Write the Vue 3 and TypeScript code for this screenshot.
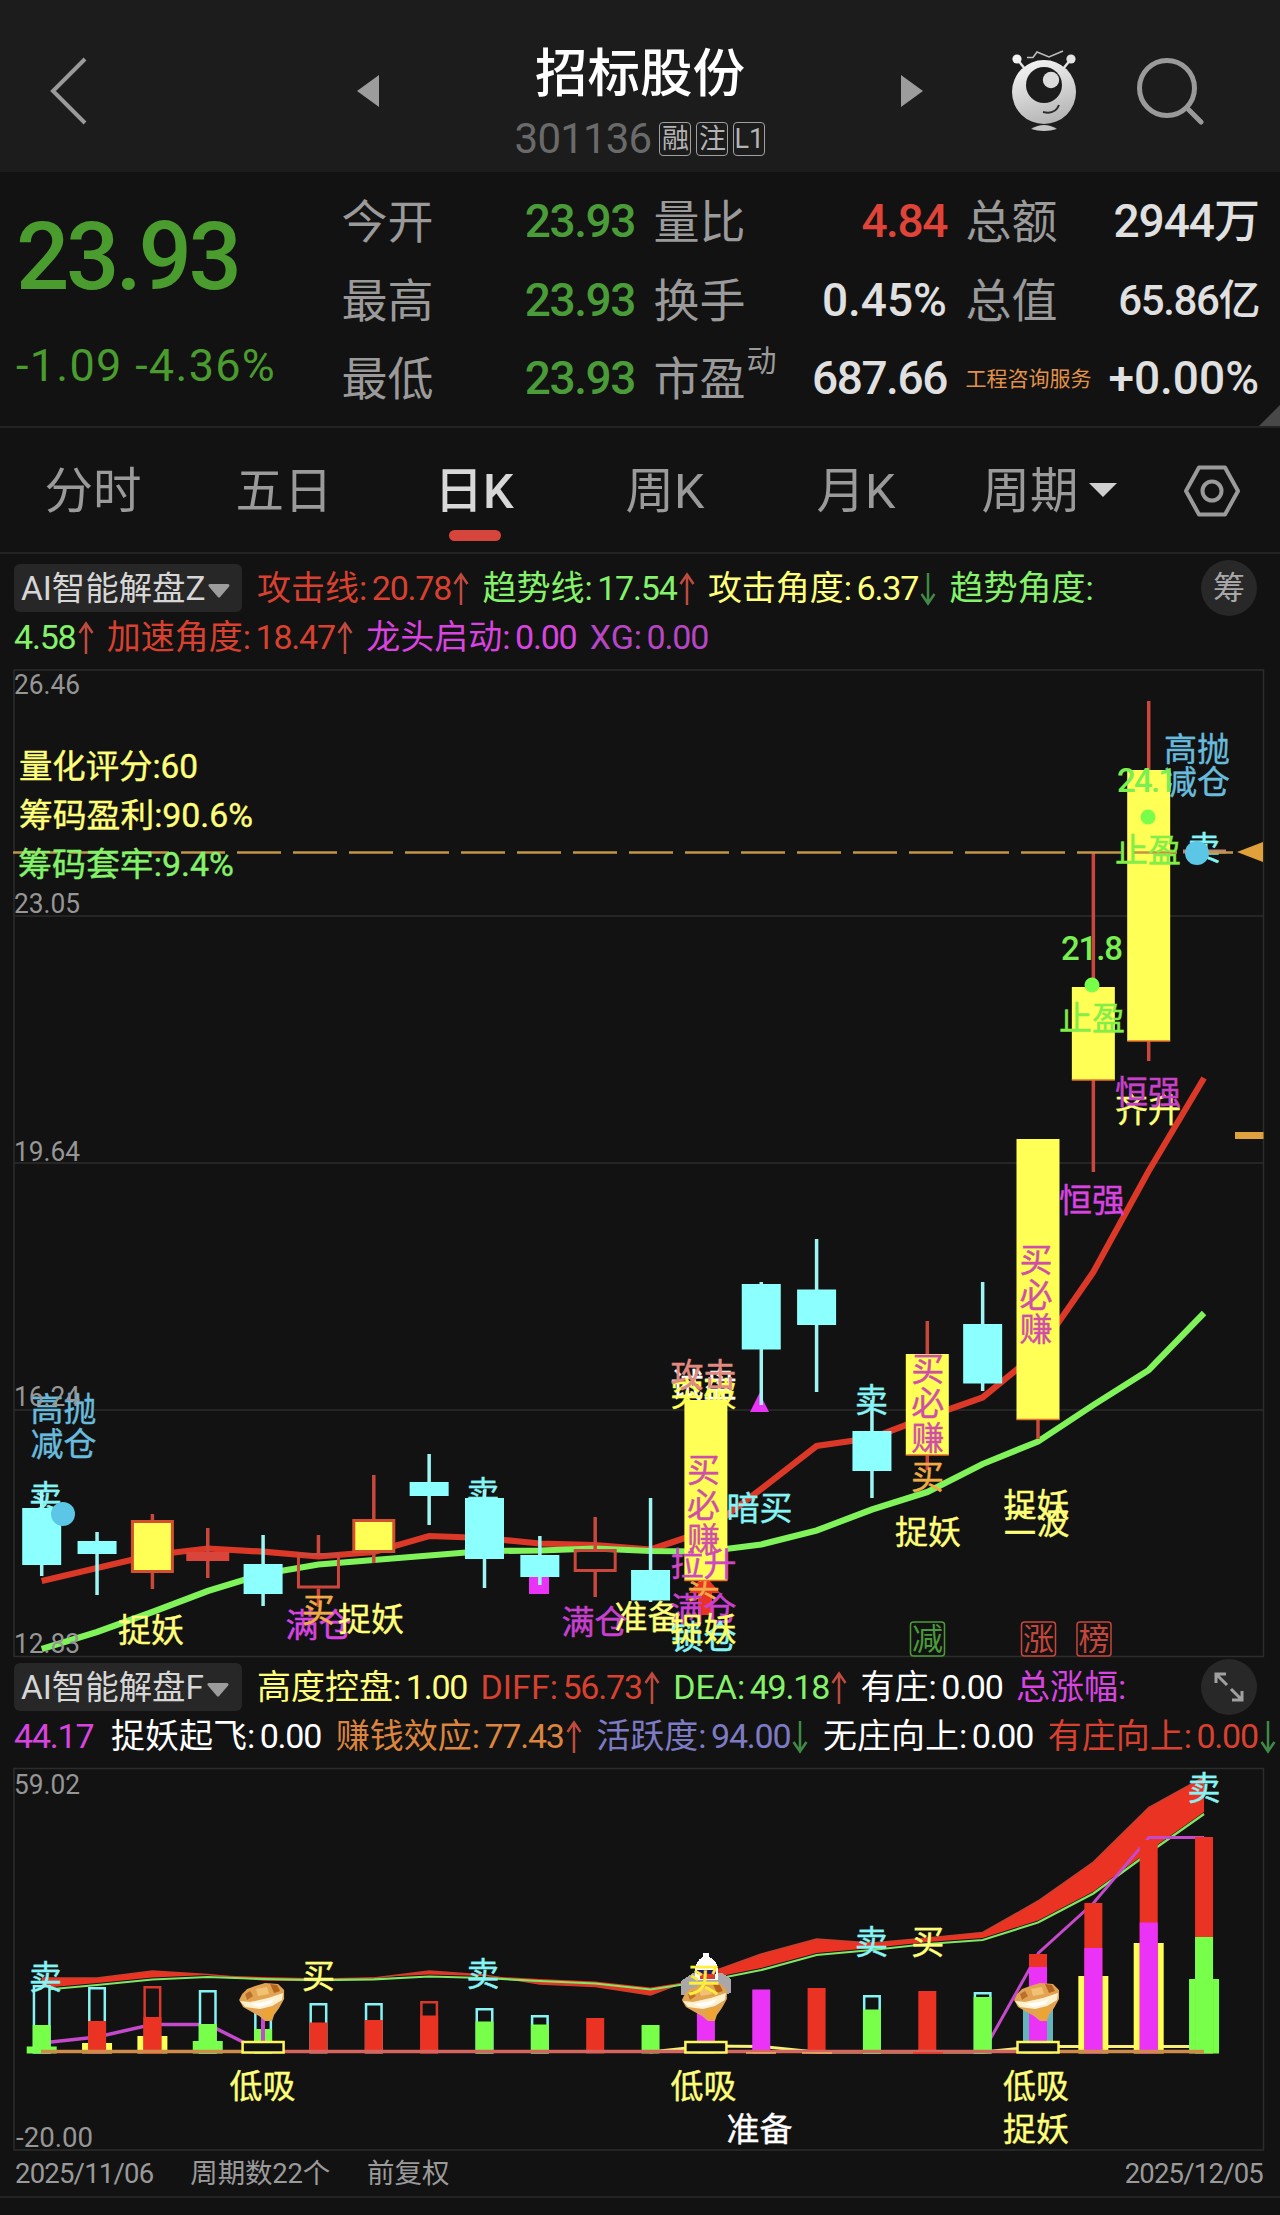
<script setup lang="ts">
import { computed } from 'vue';

type Tone = 'up' | 'down' | 'plain';
type Kind = 'cyan' | 'yellow' | 'boxed' | 'hollow' | 'flat';

interface Quote {
  label: string;
  value: string;
  tone: Tone;
  size?: 'percent' | 'large' | 'small';
  sup?: string;
  tag?: boolean;
}

interface Metric {
  name?: string;
  value?: string;
  color: string;
  trend?: 'up' | 'down';
}

interface Mark {
  text: string;
  x: number;
  y: number;
  color: string;
}

/* ----------------------------------
 * Quote header
 * --------------------------------*/
const quotes: Quote[][] = [
  [
    { label: '今开', value: '23.93', tone: 'down' },
    { label: '最高', value: '23.93', tone: 'down' },
    { label: '最低', value: '23.93', tone: 'down' },
  ],
  [
    { label: '量比', value: '4.84', tone: 'up' },
    { label: '换手', value: '0.45%', tone: 'plain', size: 'percent' },
    { label: '市盈', value: '687.66', tone: 'plain', sup: '动' },
  ],
  [
    { label: '总额', value: '2944万', tone: 'plain', size: 'large' },
    { label: '总值', value: '65.86亿', tone: 'plain', size: 'small' },
    { label: '工程咨询服务', value: '+0.00%', tone: 'plain', size: 'percent', tag: true },
  ],
];

const tabs = ['分时', '五日', '日K', '周K', '月K', '周期'];
const activeTab = '日K';

/* ----------------------------------
 * Indicator legends
 * --------------------------------*/
const RED = '#d8402f';
const GREEN = '#84f26a';
const YELLOW = '#ffff7a';
const MAGENTA = '#d944e0';
const CYAN = '#86f4f5';
const BLUE = '#68bbdc';
const ORANGE = '#efab45';

const legendZ: Metric[][] = [
  [
    { name: '攻击线', value: '20.78', color: RED, trend: 'up' },
    { name: '趋势线', value: '17.54', color: GREEN, trend: 'up' },
    { name: '攻击角度', value: '6.37', color: YELLOW, trend: 'down' },
    { name: '趋势角度', color: GREEN },
  ],
  [
    { value: '4.58', color: GREEN, trend: 'up' },
    { name: '加速角度', value: '18.47', color: RED, trend: 'up' },
    { name: '龙头启动', value: '0.00', color: MAGENTA },
    { name: 'XG', value: '0.00', color: '#b746c4' },
  ],
];

const legendF: Metric[][] = [
  [
    { name: '高度控盘', value: '1.00', color: YELLOW },
    { name: 'DIFF', value: '56.73', color: RED, trend: 'up' },
    { name: 'DEA', value: '49.18', color: GREEN, trend: 'up' },
    { name: '有庄', value: '0.00', color: '#ffffff' },
    { name: '总涨幅', color: MAGENTA },
  ],
  [
    { value: '44.17', color: MAGENTA },
    { name: '捉妖起飞', value: '0.00', color: '#ffffff' },
    { name: '赚钱效应', value: '77.43', color: '#dc853f', trend: 'up' },
    { name: '活跃度', value: '94.00', color: '#7d7bc4', trend: 'down' },
    { name: '无庄向上', value: '0.00', color: '#ffffff' },
    { name: '有庄向上', value: '0.00', color: RED, trend: 'down' },
  ],
];

/* ----------------------------------
 * Shared time axis
 * --------------------------------*/
const cx = (i: number) => 41.7 + 55.35 * i;
const toPoints = (ys: number[]) => ys.map((y, i) => `${cx(i)},${y}`).join(' ');

/* ----------------------------------
 * Candles: [kind, high, body top, body bottom, low]
 * --------------------------------*/
const candleRows: [Kind, number, number, number, number][] = [
  ['cyan', 1490, 1508, 1565, 1576],
  ['cyan', 1532, 1541, 1554, 1595],
  ['boxed', 1514, 1520, 1573, 1589],
  ['flat', 1528, 1552, 1561, 1578],
  ['cyan', 1535, 1564, 1594, 1606],
  ['hollow', 1535, 1553, 1588.5, 1607],
  ['boxed', 1475, 1519, 1553, 1563],
  ['cyan', 1454, 1482, 1496, 1525],
  ['cyan', 1490, 1498, 1559, 1588],
  ['cyan', 1536, 1555, 1577, 1585],
  ['hollow', 1517, 1549, 1572, 1597],
  ['cyan', 1498, 1570, 1600.5, 1602],
  ['yellow', 1400, 1400, 1580.5, 1581],
  ['cyan', 1282, 1284, 1349.5, 1405],
  ['cyan', 1239, 1289.5, 1325, 1392],
  ['cyan', 1400, 1431, 1471, 1498],
  ['yellow', 1321, 1354, 1455, 1470],
  ['cyan', 1282, 1324, 1383.5, 1391],
  ['yellow', 1139, 1139, 1419.5, 1439],
  ['yellow', 852, 987, 1080, 1172],
  ['yellow', 701, 770, 1041, 1061],
];

const candles = computed(() =>
  candleRows.map(([kind, high, top, bottom, low], i) => ({
    kind,
    x: cx(i),
    high,
    top,
    bottom,
    low,
    w: kind === 'cyan' ? 39 : 43,
  }))
);

const attackLine = toPoints([
  1581, 1568, 1555, 1548.5, 1551.7, 1556.5, 1552, 1536, 1538, 1543.5, 1545,
  1549.5, 1531, 1489, 1446, 1438, 1417, 1397.5, 1352, 1272, 1171, 1078,
]);
const trendLine = toPoints([
  1649, 1632, 1612, 1591, 1574, 1564.5, 1560, 1555.5, 1551, 1550.5, 1548.5,
  1551, 1551.5, 1544.5, 1530.5, 1509.5, 1492, 1464, 1441.5, 1405, 1370, 1313,
]);

const gridLines = [916, 1163, 1410];
const priceAxis = [
  { text: '26.46', y: 694 },
  { text: '23.05', y: 913 },
  { text: '19.64', y: 1160.5 },
  { text: '16.24', y: 1406 },
  { text: '12.83', y: 1653 },
];
const chipStats = [
  { text: '量化评分:60', x: 19, y: 778, w: 179, color: YELLOW },
  { text: '筹码盈利:90.6%', x: 19, y: 827, w: 234, color: YELLOW },
  { text: '筹码套牢:9.4%', x: 18, y: 876, w: 216, color: GREEN },
];

/* signals hidden partly by the candles */
const backMarks: Mark[] = [
  { text: '卖', x: 45.5, y: 1497, color: CYAN },
  { text: '卖', x: 483, y: 1493, color: CYAN },
  { text: '减仓', x: 1197, y: 782, color: BLUE },
  { text: '试盘', x: 703.5, y: 1385, color: '#ffffff' },
  { text: '突破', x: 703.5, y: 1394, color: '#ffff55' },
  { text: '买', x: 703.5, y: 1586, color: ORANGE },
  { text: '卖', x: 1204, y: 848, color: CYAN },
];

const stack = (text: string, x: number, y: number): Mark[] =>
  [...text].map((c, i) => ({ text: c, x, y: y + i * 34.6, color: '#cf4fa8' }));

const frontMarks: Mark[] = [
  { text: '高抛', x: 63.5, y: 1409, color: BLUE },
  { text: '减仓', x: 63.5, y: 1444, color: BLUE },
  { text: '捉妖', x: 151, y: 1630, color: YELLOW },
  { text: '满仓', x: 318.5, y: 1625, color: MAGENTA },
  { text: '买', x: 318.5, y: 1610, color: ORANGE },
  { text: '捉妖', x: 371, y: 1619, color: YELLOW },
  { text: '满仓', x: 594.5, y: 1621.5, color: '#c840d0' },
  { text: '准备', x: 647.5, y: 1617, color: YELLOW },
  { text: '攻击', x: 703.5, y: 1375, color: '#e08a80' },
  { text: '暗买', x: 759.5, y: 1508, color: CYAN },
  { text: '卖', x: 871.6, y: 1400, color: CYAN },
  { text: '买', x: 927.5, y: 1477, color: ORANGE },
  { text: '捉妖', x: 928, y: 1532, color: YELLOW },
  { text: '二波', x: 1036.5, y: 1522, color: YELLOW },
  { text: '捉妖', x: 1036.5, y: 1505, color: YELLOW },
  { text: '恒强', x: 1092, y: 1200, color: MAGENTA },
  { text: '齐升', x: 1148, y: 1110, color: YELLOW },
  { text: '恒强', x: 1148, y: 1092, color: '#c840c8' },
  { text: '止盈', x: 1092, y: 1018, color: '#82ee48' },
  { text: '止盈', x: 1148, y: 849.5, color: '#82ee48' },
  { text: '高抛', x: 1197, y: 749, color: BLUE },
  { text: '拉升', x: 703.5, y: 1563.5, color: '#cc48c4' },
  { text: '满仓', x: 703.5, y: 1609, color: '#c840d0' },
  { text: '锁仓', x: 703.5, y: 1637, color: CYAN },
  { text: '捉妖', x: 703.5, y: 1629, color: '#ffff60' },
  ...stack('买必赚', 703.5, 1470),
  ...stack('买必赚', 927.7, 1368.5),
  ...stack('买必赚', 1036, 1260),
];

const badges = [
  { text: '减', x: 927.5, color: '#4b9a39' },
  { text: '涨', x: 1038.5, color: '#c5463c' },
  { text: '榜', x: 1094, color: '#c5463c' },
];

/* ----------------------------------
 * Lower panel
 * --------------------------------*/
const BASE = 2053;
const diff = [
  1978, 1978, 1971, 1974.5, 1980, 1980.5, 1978, 1971, 1975, 1984, 1986.5, 1995,
  1974, 1954, 1939, 1943, 1938, 1932.5, 1901, 1862, 1807.5, 1777,
];
const dea = [
  1990, 1985, 1979.5, 1977, 1979, 1980.2, 1979.3, 1976.5, 1978, 1981, 1983.5,
  1989.5, 1981, 1970, 1955, 1950, 1944, 1940, 1922.5, 1893.5, 1853, 1814,
];
const ribbon = computed(
  () =>
    `${toPoints(diff)} ${dea
      .map((y, i) => `${cx(i)},${y - 2}`)
      .reverse()
      .join(' ')}`
);

/* outlined part of each bar: [index, top, color] */
const shells: [number, number, string][] = [
  [0, 1985, CYAN], [1, 1987, CYAN], [2, 1986, '#d9382b'], [3, 1990, CYAN],
  [4, 1996, CYAN], [5, 2003, CYAN], [6, 2003, CYAN], [7, 2001, '#d9382b'],
  [8, 2008, CYAN], [9, 2015, CYAN], [15, 1995, CYAN], [17, 1992, CYAN],
];
/* filled part of each bar: [index, top, color] */
const fills: [number, number, string][] = [
  [0, 2025, '#78ff4a'], [1, 2021, '#ea3323'], [2, 2017, '#ea3323'],
  [3, 2024, '#78ff4a'], [4, 2029, '#78ff4a'], [5, 2022.5, '#ea3323'],
  [6, 2020, '#ea3323'], [7, 2015.5, '#ea3323'], [8, 2021.5, '#78ff4a'],
  [9, 2024.5, '#78ff4a'], [10, 2018, '#ea3323'], [11, 2025, '#78ff4a'],
  [12, 1995, '#ea33f7'], [13, 1989.5, '#ea33f7'], [14, 1988, '#ea3323'],
  [15, 2009.5, '#78ff4a'], [16, 1991, '#ea3323'], [17, 1997, '#78ff4a'],
  [18, 1954, '#ea3323'], [18, 1967, '#ea33f7'],
  [19, 1903, '#ea3323'], [19, 1948, '#ea33f7'],
  [20, 1840, '#ea3323'], [20, 1922.5, '#ea33f7'],
  [21, 1837, '#ea3323'], [21, 1937, '#78ff4a'],
];
/* wide bars behind the narrow ones */
const wides: [number, number, string][] = [
  [0, 2046.5, '#78ff4a'], [1, 2043, '#ffff55'], [2, 2036, '#ffff55'],
  [3, 2041, '#78ff4a'], [18, 1990, '#63b5bb'], [19, 1976, '#ffff55'],
  [20, 1943, '#ffff55'], [21, 1979, '#78ff4a'],
];
const boxes = [4, 12, 18];

const lowerMarks: Mark[] = [
  { text: '卖', x: 45.5, y: 1977, color: CYAN },
  { text: '买', x: 318.5, y: 1976, color: YELLOW },
  { text: '卖', x: 483, y: 1974, color: CYAN },
  { text: '卖', x: 871.6, y: 1942, color: CYAN },
  { text: '买', x: 927.7, y: 1942, color: YELLOW },
  { text: '卖', x: 1204, y: 1788, color: CYAN },
  { text: '低吸', x: 262.5, y: 2086, color: YELLOW },
  { text: '低吸', x: 703.5, y: 2086, color: YELLOW },
  { text: '准备', x: 759.5, y: 2129, color: '#ffffff' },
  { text: '低吸', x: 1036, y: 2086, color: YELLOW },
  { text: '捉妖', x: 1036, y: 2129, color: YELLOW },
];
</script>

<template>
  <main class="page">
    <header class="topbar">
      <svg class="topbar__back" viewBox="0 0 40 70" width="40" height="70">
        <path d="M36 3 L4 35 L36 67" fill="none" stroke="#9a9a9a" stroke-width="4" />
      </svg>
      <svg class="topbar__prev" viewBox="0 0 22 32" width="22" height="32">
        <path d="M22 0 L0 16 L22 32 Z" fill="#9c9c9c" />
      </svg>
      <div class="topbar__stock">
        <h1 class="topbar__name">招标股份</h1>
        <div class="topbar__code">
          <span class="topbar__number">301136</span>
          <span v-for="flag in ['融', '注', 'L1']" :key="flag" class="topbar__flag">{{ flag }}</span>
        </div>
      </div>
      <svg class="topbar__next" viewBox="0 0 22 32" width="22" height="32">
        <path d="M0 0 L22 16 L0 32 Z" fill="#9c9c9c" />
      </svg>
      <svg class="topbar__robot" viewBox="0 0 66 84" width="66" height="84">
        <defs>
          <linearGradient id="robot" x1="0.3" y1="0" x2="0.6" y2="1">
            <stop offset="0" stop-color="#f4f4f4" />
            <stop offset="1" stop-color="#b4b4b4" />
          </linearGradient>
        </defs>
        <path d="M6 10 L14 20 M60 10 L52 20" stroke="#e2e2e2" stroke-width="2.5" />
        <circle cx="6" cy="10" r="4.6" fill="#f2f2f2" />
        <circle cx="60" cy="10" r="4.6" fill="#e4e4e4" />
        <path d="M16 8.500 L22 8.500 L26 3 L38 8 L52 2" fill="none" stroke="#bdbdbd" stroke-width="1.6" />
        <circle cx="33" cy="43" r="32" fill="url(#robot)" />
        <circle cx="33" cy="36" r="18" fill="#1c1c1c" />
        <circle cx="40" cy="31" r="8.200" fill="#dcdcdc" />
        <path d="M32 63 Q44 66 48 56" fill="none" stroke="#2c2c2c" stroke-width="2" />
        <path d="M20 80 Q33 72 46 80 Q33 84 20 80 Z" fill="#c4c4c4" />
      </svg>
      <svg class="topbar__search" viewBox="0 0 68 70" width="68" height="70">
        <circle cx="31" cy="31" r="27.500" fill="none" stroke="#9a9a9a" stroke-width="5" />
        <path d="M51 51 L65 65" stroke="#9a9a9a" stroke-width="5" stroke-linecap="round" />
      </svg>
    </header>

    <section class="quote">
      <div class="quote__main">
        <strong class="quote__price">23.93</strong>
        <span class="quote__change">-1.09 -4.36%</span>
      </div>
      <dl v-for="(column, c) in quotes" :key="c" class="quote__column">
        <div v-for="q in column" :key="q.label" class="quote__row">
          <dt :class="q.tag ? 'quote__tag' : 'quote__label'">
            {{ q.label }}<sup v-if="q.sup">{{ q.sup }}</sup>
          </dt>
          <dd class="quote__value" :class="[`quote__value--${q.tone}`, q.size && `quote__value--${q.size}`]">
            {{ q.value }}
          </dd>
        </div>
      </dl>
      <i class="quote__corner" />
    </section>

    <nav class="tabs">
      <button v-for="tab in tabs" :key="tab" class="tabs__item" :class="{ 'tabs__item--active': tab === activeTab }">
        {{ tab }}<i v-if="tab === '周期'" class="tabs__caret" />
      </button>
      <svg class="tabs__settings" viewBox="0 0 58 52" width="58" height="52">
        <path d="M16 2.500 H42 L55 26 L42 49.500 H16 L3 26 Z" fill="none" stroke="#9a9a9a" stroke-width="4" stroke-linejoin="round" />
        <circle cx="29" cy="26" r="9.500" fill="none" stroke="#9a9a9a" stroke-width="4" />
      </svg>
    </nav>

    <section
      v-for="legend in [
        { id: 'Z', rows: legendZ },
        { id: 'F', rows: legendF },
      ]"
      :key="legend.id"
      class="legend"
      :class="`legend--${legend.id}`"
    >
      <div v-for="(row, r) in legend.rows" :key="r" class="legend__row">
        <button v-if="r === 0" class="legend__picker">
          <span>AI智能解盘{{ legend.id }}</span>
          <svg class="legend__caret" viewBox="0 0 24 14" width="24" height="14">
            <path d="M3 1.500 H21 L12 12 Z" fill="#9c9c9c" stroke="#9c9c9c" stroke-width="3" stroke-linejoin="round" />
          </svg>
        </button>
        <span v-for="(m, k) in row" :key="k" class="legend__item" :style="{ color: m.color }">
          <span v-if="m.name" class="legend__name">{{ m.name }}:</span>
          <span v-if="m.value" class="legend__num">{{ m.value }}</span>
          <svg v-if="m.trend" class="legend__arrow" viewBox="0 0 16 34" width="16" height="34">
            <path
              v-if="m.trend === 'up'"
              d="M8 33 V3 M1.500 12 L8 2.500 L14.500 12"
              fill="none"
              stroke="#bf4a3e"
              stroke-width="2.500"
            />
            <path v-else d="M8 1 V31 M1.500 22 L8 31.500 L14.500 22" fill="none" stroke="#3f8a45" stroke-width="2.500" />
          </svg>
        </span>
        <span v-if="r === 0" class="legend__round">
          <template v-if="legend.id === 'Z'">筹</template>
          <svg v-else viewBox="0 0 30 30" width="30" height="30">
            <path
              d="M13 13 L3 3 M2 11 V2 H12 M17 17 L27 27 M28 19 V28 H18"
              fill="none"
              stroke="#a0a0a0"
              stroke-width="3"
            />
          </svg>
        </span>
      </div>
    </section>

    <svg class="chart chart--price" viewBox="0 666 1280 994" width="1280" height="994">
      <path d="M14 670 H1263.500 V1656.500 H14 Z" class="frame" />
      <path v-for="y in gridLines" :key="y" :d="`M14 ${y} H1263`" class="frame" />

      <polyline :points="attackLine" class="line line--attack" />
      <polyline :points="trendLine" class="line line--trend" />

      <rect x="529" y="1575" width="20" height="19" fill="#ea33f7" />
      <path d="M759.500 1393 L769 1412 H750 Z" fill="#ea33f7" />
      <path d="M704 1574 L720 1593 H712 V1615 H698 V1593 H689 Z" fill="#ea3323" />
      <path d="M1183 851.500 H1226" stroke="#b98178" stroke-width="4" />

      <text
        v-for="(m, i) in backMarks"
        :key="`b${i}`"
        class="mark"
        :x="m.x"
        :y="m.y + 12"
        :fill="m.color"
        :stroke="m.color"
      >{{ m.text }}</text>

      <g v-for="c in candles" :key="c.x" :class="`candle candle--${c.kind}`">
        <path v-if="c.kind === 'hollow'" :d="`M${c.x} ${c.high} V${c.top} M${c.x} ${c.bottom} V${c.low}`" class="wick" />
        <path v-else :d="`M${c.x} ${c.high} V${c.low}`" class="wick" />
        <rect
          v-if="c.kind === 'hollow' || c.kind === 'boxed'"
          class="body"
          :x="c.x - c.w / 2 + 1.5"
          :y="c.top + 1.5"
          :width="c.w - 3"
          :height="c.bottom - c.top - 3"
        />
        <rect v-else class="body" :x="c.x - c.w / 2" :y="c.top" :width="c.w" :height="c.bottom - c.top" />
        <path v-if="c.kind === 'yellow'" :d="`M${c.x - c.w / 2} ${c.bottom} h${c.w}`" stroke="#e8702f" stroke-width="1.500" />
      </g>

      <path d="M13 852.500 H1233" stroke="#c09548" stroke-width="2.500" stroke-dasharray="44 12" />
      <path d="M1237 852 L1263 842 V862 Z" fill="#e0a13b" />
      <path d="M1235 1135.500 H1263.500" stroke="#dfa03e" stroke-width="7" />

      <circle cx="63" cy="1514" r="12" fill="#5cc6e6" />
      <circle cx="1197" cy="853" r="12" fill="#5cc6e6" />
      <circle cx="1092" cy="985" r="7.500" fill="#78ff4a" />
      <circle cx="1148" cy="817" r="7.500" fill="#78ff4a" />

      <text
        v-for="(m, i) in frontMarks"
        :key="`f${i}`"
        class="mark"
        :x="m.x"
        :y="m.y + 12"
        :fill="m.color"
        :stroke="m.color"
      >{{ m.text }}</text>
      <text class="target" x="1061" y="960" textLength="62">21.8</text>
      <text class="target" x="1117" y="792" textLength="60">24.1</text>

      <text
        v-for="s in chipStats"
        :key="s.text"
        class="mark mark--left"
        :x="s.x"
        :y="s.y"
        :textLength="s.w"
        lengthAdjust="spacingAndGlyphs"
        :fill="s.color"
        :stroke="s.color"
      >{{ s.text }}</text>

      <g v-for="b in badges" :key="b.text">
        <rect :x="b.x - 17" y="1622" width="34" height="34" rx="3" fill="#121212" :stroke="b.color" stroke-width="1.500" />
        <text class="badge" :x="b.x" y="1650" :fill="b.color">{{ b.text }}</text>
      </g>

      <text v-for="a in priceAxis" :key="a.text" class="axis" x="14" :y="a.y" textLength="66" lengthAdjust="spacingAndGlyphs">{{ a.text }}</text>
    </svg>

    <svg class="chart chart--volume" viewBox="0 1764 1280 390" width="1280" height="390">
      <path d="M14 1768.500 H1263.500 V2150 H14 Z" class="frame" />

      <polygon :points="ribbon" fill="#ea3323" />
      <polyline :points="toPoints(diff)" fill="none" stroke="#c9402e" stroke-width="1.500" />
      <polyline :points="toPoints(dea)" fill="none" stroke="#7fe763" stroke-width="2.200" />

      <polyline
        points="41.700,2043 97,2037 152,2024.500 208,2024.500 251,2046"
        fill="none"
        stroke="#c44acb"
        stroke-width="3.500"
      />
      <polyline
        points="983,2052 1038.500,1953 1093.500,1903 1149,1837.500 1204,1837.500"
        fill="none"
        stroke="#c44acb"
        stroke-width="3"
      />
      <polyline
        points="650,2052 706,2046 761,2046.500 816,2052 983,2052 1038,2046.500 1204,2046.500"
        fill="none"
        stroke="#f7ee7c"
        stroke-width="3"
      />

      <rect
        v-for="([i, top, color], k) in wides"
        :key="`w${k}`"
        :x="cx(i) - 15"
        :y="top"
        width="30"
        :height="BASE + 0.5 - top"
        :fill="color"
      />
      <rect
        v-for="([i, top, color], k) in shells"
        :key="`s${k}`"
        :x="cx(i) - 7.75"
        :y="top + 1.25"
        width="15.500"
        :height="BASE - top - 2"
        fill="#121212"
        :stroke="color"
        stroke-width="2.500"
      />
      <rect
        v-for="([i, top, color], k) in fills"
        :key="`v${k}`"
        :x="cx(i) - 9"
        :y="top"
        width="18"
        :height="BASE + 0.5 - top"
        :fill="color"
      />
      <path d="M263 2018 V2042" stroke="#c44acb" stroke-width="4" />

      <path d="M41 2051.500 H263 M1038 2051.500 H1204" stroke="#cf8a4c" stroke-width="3.500" />
      <path d="M263 2051.500 H1038" stroke="#d4665f" stroke-width="3.500" />
      <path d="M746 2053 H776 M802 2053 H832" stroke="#f4b06a" stroke-width="1.500" />
      <path d="M913 2053 H943" stroke="#ea3323" stroke-width="1.500" />

      <rect
        v-for="i in boxes"
        :key="`x${i}`"
        :x="cx(i) - 20.5"
        y="2042"
        width="41"
        height="10.500"
        fill="#121212"
        stroke="#fdf65c"
        stroke-width="2.500"
      />

      <g shape-rendering="crispEdges">
        <path d="M681 1981 L693 1973 H722 L731 1979 V1993 L722 1995 H681 Z" fill="#a9a7a8" />
        <path d="M703 1953 h6 v4 q8 3 9 13 v10 h-23 v-10 q1 -10 8 -13 Z" fill="#ffffff" />
        <path d="M697 1970 h19 v4 h-19 Z" fill="#24186e" />
        <path d="M700 1974 h15 v5 h-15 Z" fill="#d93a2c" />
      </g>

      <!-- gold ingots -->
      <g v-for="i in boxes" :key="`g${i}`" :transform="`translate(${cx(i) - 1} 2002)`">
        <path
          d="M-20 -8 L-15 -13 L-7 -16 L3 -19 L16 -18 L22 -12 L22 -3 L17 6 L12 13 L10 19 L3 19 L-3 14 L-12 9 L-19 5 L-23 -2 Z"
          fill="#e2a452"
        />
        <path d="M-17 -8 L-12 -11 L-9 -6 L-15 -2 Z" fill="#b9702c" />
        <path d="M8 -18 L15 -17 L18 -11 L12 -9 Z" fill="#b5651f" />
        <path d="M-6 -13 L5 -15 L7 -8 L-4 -6 Z" fill="#f0c272" />
        <path d="M-22 -1 L-12 0 L6 -4 L21 -9 L20 -2 L10 4 L-2 7 L-17 5 Z" fill="#fff1cd" />
        <path d="M-12 2 L2 0 L12 -3 L8 2 L-3 5 Z" fill="#ffffff" />
        <path d="M0 9 L12 5 L10 16 L4 18 Z" fill="#eda433" />
      </g>
      <text class="mark" x="703.500" y="1992" fill="#ffee3a" stroke="#ffee3a">买</text>

      <text
        v-for="(m, i) in lowerMarks"
        :key="`l${i}`"
        class="mark"
        :x="m.x"
        :y="m.y + 12"
        :fill="m.color"
        :stroke="m.color"
      >{{ m.text }}</text>
      <text class="axis" x="14" y="1794" textLength="66" lengthAdjust="spacingAndGlyphs">59.02</text>
      <text class="axis" x="16" y="2147" textLength="77" lengthAdjust="spacingAndGlyphs">-20.00</text>
    </svg>

    <footer class="footer">
      <span class="footer__date">2025/11/06</span>
      <span class="footer__count">周期数22个</span>
      <span>前复权</span>
      <span class="footer__date footer__date--end">2025/12/05</span>
    </footer>
  </main>
</template>

<style>
body {
  margin: 0;
  background: #121212;
}
</style>

<style scoped>
.page {
  display: grid;
  grid-template-rows: 172px 256px 126px 112px 994px 104px 390px 61px;
  grid-template-columns: 1280px;
  width: 1280px;
  height: 2215px;
  overflow: hidden;
  background: #121212;
  color: #9a9a9a;
  font-family: Roboto, 'Noto Sans CJK SC', sans-serif;
}
button {
  padding: 0;
  border: none;
  background: none;
  color: inherit;
  font: inherit;
}

/* Top bar */
.topbar {
  display: flex;
  box-sizing: border-box;
  height: 172px;
  padding-left: 49px;
  background: #1c1c1c;
}
.topbar__back {
  margin-top: 56px;
}
.topbar__prev {
  margin: 75px 0 0 268px;
}
.topbar__stock {
  display: flex;
  flex-direction: column;
  align-items: center;
  width: 522px;
}
.topbar__name {
  margin: 43px 0 0;
  color: #ffffff;
  font-size: 52.5px;
  font-weight: 500;
  line-height: 62px;
}
.topbar__code {
  display: flex;
  align-items: center;
  gap: 5px;
  height: 36px;
  margin-top: 16px;
}
.topbar__number {
  margin-right: 3px;
  color: #6a6a6a;
  font-size: 42px;
  line-height: 34px;
  letter-spacing: -0.8px;
}
.topbar__flag {
  box-sizing: border-box;
  width: 32px;
  height: 34px;
  border: 1.5px solid #a0a0a0;
  border-radius: 4px;
  color: #b4b4b4;
  font-size: 27px;
  line-height: 32px;
  text-align: center;
}
.topbar__next {
  margin-top: 75px;
}
.topbar__robot {
  margin: 49px 0 0 88px;
}
.topbar__search {
  margin: 57px 0 0 59px;
}

/* Quote */
.quote {
  position: relative;
  display: flex;
  box-sizing: border-box;
  height: 256px;
  padding: 11px 21px 0 16px;
  border-bottom: 2px solid #232323;
}
.quote__main {
  display: flex;
  flex-direction: column;
  width: 325.5px;
  color: #4a9c2e;
}
.quote__price {
  margin-top: 24px;
  font-size: 94px;
  font-weight: 500;
  line-height: 100px;
  letter-spacing: -3.5px;
}
.quote__change {
  margin-top: 34px;
  font-size: 45px;
  line-height: 50px;
  letter-spacing: 1.3px;
  white-space: nowrap;
}
.quote__column {
  width: 293.5px;
  margin: 0 18.5px 0 0;
}
.quote__column:last-of-type {
  margin-right: 0;
}
.quote__row {
  display: flex;
  align-items: center;
  justify-content: space-between;
  height: 78.5px;
}
.quote__label {
  position: relative;
  font-size: 46px;
  line-height: 78px;
}
.quote__label sup {
  position: absolute;
  top: -18px;
  left: 93px;
  font-size: 30px;
}
.quote__tag {
  margin-top: -4px;
  color: #e2924a;
  font-size: 21px;
  white-space: nowrap;
}
.quote__value {
  margin: -2px 0 0;
  font-size: 46px;
  font-weight: 500;
  line-height: 78px;
  letter-spacing: -1.4px;
  white-space: nowrap;
}
.quote__value--percent {
  letter-spacing: 0;
}
.quote__value--large {
  letter-spacing: -1px;
}
.quote__value--small {
  margin-top: 0;
  font-size: 42px;
}
.quote__value--up {
  color: #e04438;
}
.quote__value--down {
  color: #4a9c38;
}
.quote__value--plain {
  color: #e0e0e0;
}
.quote__corner {
  position: absolute;
  right: 0;
  bottom: 0;
  border: solid transparent;
  border-width: 0 0 21px 21px;
  border-bottom-color: #484848;
}

/* Tabs */
.tabs {
  display: flex;
  box-sizing: border-box;
  height: 126px;
  padding-left: 44.5px;
  border-bottom: 2px solid #232323;
}
.tabs__item {
  position: relative;
  width: 194px;
  font-size: 48.5px;
  line-height: 128px;
  text-align: left;
  white-space: nowrap;
}
.tabs__item:nth-child(2) {
  margin-left: -3px;
}
.tabs__item:nth-child(3) {
  width: 192px;
  margin-left: 5px;
}
.tabs__item:nth-child(4) {
  margin-left: -1px;
}
.tabs__item:nth-child(5) {
  margin-left: -3px;
}
.tabs__item:nth-child(6) {
  margin-left: -29px;
}
.tabs__item--active {
  color: #d8d8d8;
  font-weight: 500;
}
.tabs__item--active::after {
  content: '';
  position: absolute;
  bottom: 11px;
  left: 14px;
  width: 52px;
  height: 11px;
  border-radius: 6px;
  background: #d5453c;
}
.tabs__caret {
  display: inline-block;
  margin: 0 0 11px 10px;
  border: solid transparent;
  border-width: 14px 14px 0;
  border-top-color: #cfcfcf;
}
.tabs__settings {
  margin: 37px 0 0 7px;
}

/* Legends */
.legend--Z {
  padding-top: 10px;
}
.legend--F {
  grid-row: 6;
  padding-top: 3px;
}
.legend__row {
  position: relative;
  display: flex;
  align-items: center;
  height: 49px;
  padding-left: 14px;
  font-size: 34px;
  line-height: 51px;
  white-space: nowrap;
}
.legend__picker {
  display: flex;
  align-items: center;
  box-sizing: border-box;
  width: 228px;
  height: 48px;
  margin: -1px 15px 0 0;
  padding-left: 7px;
  border-radius: 6px;
  background: #272727;
  color: #d6d6d6;
  font-size: 33.4px;
}
.legend__caret {
  margin-top: 6px;
  margin-left: 2px;
}
.legend__item {
  display: flex;
  align-items: center;
  margin-right: 13.3px;
}
.legend--F .legend__row:last-child .legend__item {
  margin-right: 14.5px;
}
.legend--F .legend__row:last-child .legend__item:first-child {
  margin-right: 17.5px;
}
.legend__name {
  margin-right: 4.5px;
}
.legend__num {
  letter-spacing: -1.2px;
}
.legend__arrow {
  margin-left: 2px;
}
.legend__round {
  position: absolute;
  top: -4px;
  right: 23px;
  display: flex;
  align-items: center;
  justify-content: center;
  width: 56px;
  height: 56px;
  border-radius: 50%;
  background: #282828;
  color: #a8a8a8;
  font-size: 32px;
}

/* Charts */
.chart {
  display: block;
}
.chart--price {
  grid-row: 5;
}
.frame {
  fill: none;
  stroke: #2c2c2c;
  stroke-width: 1.5;
}
.line {
  fill: none;
  stroke-width: 6.2;
}
.line--attack {
  stroke: #db3828;
}
.line--trend {
  stroke: #80f35a;
}
.wick {
  stroke: #c9473b;
  stroke-width: 3.5;
}
.candle--cyan .wick {
  stroke: #9df6f4;
}
.candle--cyan .body {
  fill: #8cffff;
}
.candle--yellow .body {
  fill: #ffff55;
}
.candle--flat .body {
  fill: #d9453a;
}
.candle--boxed .body {
  fill: #ffff55;
  stroke: #d2502e;
  stroke-width: 3;
}
.candle--hollow .body {
  fill: none;
  stroke: #cb463b;
  stroke-width: 3;
}
.mark {
  font-size: 33px;
  stroke-width: 0.4;
  text-anchor: middle;
}
.mark--left {
  text-anchor: start;
}
.target {
  fill: #79ef52;
  font-size: 33px;
  font-weight: 500;
}
.badge {
  font-size: 31px;
  text-anchor: middle;
}
.axis {
  fill: #969696;
  font-size: 28px;
}

/* Footer */
.footer {
  display: flex;
  box-sizing: border-box;
  height: 44px;
  padding: 0 17px 0 15px;
  border-bottom: 2px solid #232323;
  color: #9a9a9a;
  font-size: 27.5px;
  line-height: 40px;
}
.footer__date {
  letter-spacing: -0.8px;
}
.footer__count {
  margin: 0 37px;
  letter-spacing: -0.2px;
}
.footer__date--end {
  margin-left: auto;
}
</style>
